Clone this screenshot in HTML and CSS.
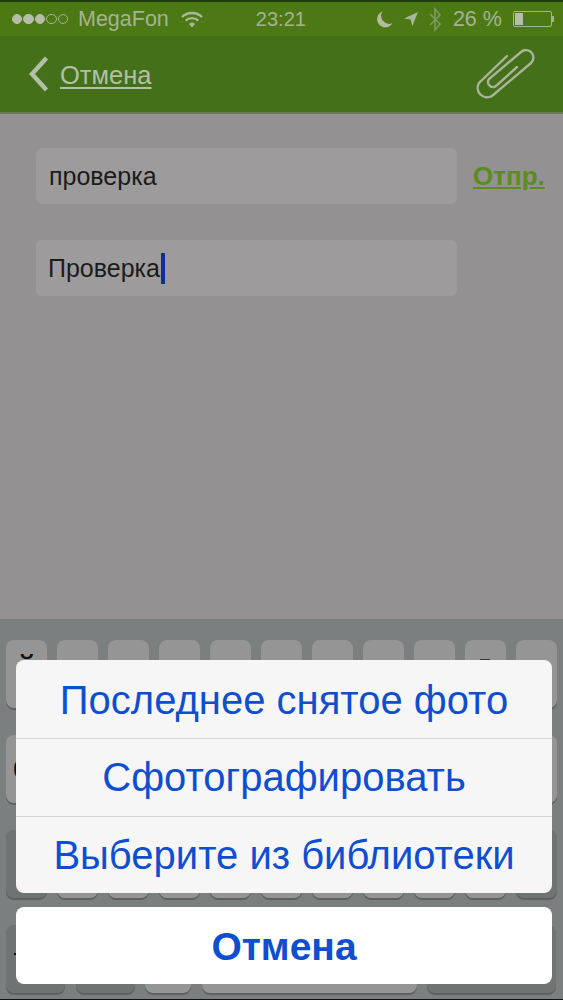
FILE: index.html
```html
<!DOCTYPE html>
<html lang="ru">
<head>
    <meta charset="UTF-8">
    <meta name="viewport" content="width=device-width, initial-scale=1.0">
    <title>Отправка</title>
    <link rel="stylesheet" href="styles.css">
</head>
<body>
    <div class="screen">
        <div class="status">
            <div class="dots">
                <i class="on"></i><i class="on"></i><i class="on"></i><i></i><i></i>
            </div>
            <span class="carrier">MegaFon</span>
            <svg class="wifi" width="22" height="17" viewBox="0 0 22 17">
                <path d="M1 6a14.500 14.500 0 0 1 20 0" fill="none" stroke="#a9b89a" stroke-width="2.400"/>
                <path d="M4.600 9.600a9.400 9.400 0 0 1 12.800 0" fill="none" stroke="#a9b89a" stroke-width="2.400"/>
                <path d="M8 13a4.400 4.400 0 0 1 6 0l-3 3.400z" fill="#a9b89a"/>
            </svg>
            <span class="time">23:21</span>
            <svg class="moon" width="18" height="17" viewBox="0 0 18 17">
                <path d="M7.500 0.500a8.200 8.200 0 1 0 10 11.600a8 8 0 0 1-10-11.600z" fill="#b0bba2"/>
            </svg>
            <svg class="arrow" width="14" height="14" viewBox="0 0 14 14">
                <path d="M14 0L0 6.500l6.600.9L8.400 14z" fill="#a9b89a"/>
            </svg>
            <svg class="bt" width="14" height="25" viewBox="0 0 14 25">
                <path d="M2 7l10 10-5 6V2l5 6L2 18" fill="none" stroke="#7f9a66" stroke-width="1.500"/>
            </svg>
            <span class="percent">26 %</span>
            <div class="battery"><div class="battery-fill"></div></div>
            <div class="battery-tip"></div>
        </div>

        <div class="nav">
            <svg class="chevron" width="20" height="36" viewBox="0 0 20 36">
                <path d="M17.500 2L3 18l14.500 16" fill="none" stroke="#b3bfa6" stroke-width="4.400"/>
            </svg>
            <a class="nav-link">Отмена</a>
            <svg class="clip" width="70" height="60" viewBox="0 0 70 60">
                <path d="M37 12L9 39A9.500 9.500 0 0 0 22 52L61 19A7 7 0 0 0 51 8L19 35A4 4 0 0 0 27 41L47 23" fill="none" stroke="#a9b49b" stroke-width="2.400" stroke-linecap="round"/>
            </svg>
        </div>

        <div class="form">
            <div class="form-row">
                <div class="field">проверка</div>
                <a class="send">Отпр.</a>
            </div>
            <div class="form-row">
                <div class="field field-second">Проверка<span class="caret"></span></div>
            </div>
        </div>

        <div class="keyboard">
            <div class="key-row">
                <div class="key">й</div><div class="key"></div><div class="key"></div><div class="key"></div><div class="key"></div><div class="key"></div><div class="key"></div><div class="key"></div><div class="key"></div><div class="key"><span class="key-tip"></span></div><div class="key"></div>
            </div>
            <div class="key-row">
                <div class="key key-side">ф</div><div class="key"></div><div class="key"></div><div class="key"></div><div class="key"></div><div class="key"></div><div class="key"></div><div class="key"></div><div class="key"></div><div class="key"></div><div class="key"></div>
            </div>
            <div class="key-row">
                <div class="key key-dark"></div><div class="key"></div><div class="key"></div><div class="key"></div><div class="key"></div><div class="key"></div><div class="key"></div><div class="key"></div><div class="key"></div><div class="key"></div><div class="key key-dark"></div>
            </div>
            <div class="key-row key-row-bottom">
                <div class="key key-dark"><span class="key-speck"></span></div>
                <div class="key key-dark"></div>
                <div class="key"></div>
                <div class="key"></div>
                <div class="key key-dark"></div>
            </div>
        </div>

        <div class="sheet">
            <div class="sheet-group">
                <div class="sheet-item">Последнее снятое фото</div>
                <div class="sheet-item">Сфотографировать</div>
                <div class="sheet-item">Выберите из библиотеки</div>
            </div>
            <div class="sheet-cancel">Отмена</div>
        </div>
    </div>
</body>
</html>
```

FILE: styles.css
```css
body {
    margin: 0;
    background-color: #111;
    font-family: "Liberation Sans", Arial, sans-serif;
}
.screen {
    position: relative;
    display: flex;
    flex-direction: column;
    width: 563px;
    height: 999px;
    overflow: hidden;
    background-color: #939191;
}
.status {
    display: flex;
    align-items: center;
    height: 34px;
    padding-left: 11.500px;
    border-top: 2px solid #1f3d0e;
    background-color: #4d7914;
    color: #a4b394;
    font-size: 21.500px;
}
.dots {
    display: flex;
    gap: 1px;
}
.dots i {
    width: 8.500px;
    height: 8.500px;
    border: 1px solid #a4b394;
    border-radius: 50%;
}
.dots .on {
    background-color: #b6bdab;
    border-color: #b6bdab;
}
.carrier {
    margin-left: 10px;
}
.wifi {
    margin-left: 12px;
}
.time {
    margin-left: 53px;
    font-size: 20px;
}
.moon {
    margin-left: 69px;
}
.arrow {
    margin-left: 11px;
}
.bt {
    margin-left: 10px;
}
.percent {
    margin-left: 11px;
    width: 60px;
    white-space: nowrap;
}
.battery {
    width: 35px;
    height: 12px;
    border: 1px solid #a4b394;
    border-radius: 2px;
    padding: 1px;
}
.battery-fill {
    width: 8px;
    height: 12px;
    background-color: #b6bdab;
}
.battery-tip {
    width: 2px;
    height: 6px;
    background-color: #a4b394;
}
.nav {
    display: flex;
    align-items: center;
    height: 78px;
    padding: 0 23px 0 29px;
    box-sizing: border-box;
    border-bottom: 2px solid #6a7a58;
    background-color: #45701a;
    color: #b3bfa6;
}
.nav-link {
    flex: 1;
    margin-left: 11px;
    padding-top: 3px;
    font-size: 25.500px;
    text-decoration: underline;
    text-underline-offset: 3px;
}
.chevron {
    flex-shrink: 0;
}
.form {
    flex: 1;
    padding: 34px 10px 0 36px;
}
.form-row {
    display: flex;
    align-items: center;
    margin-bottom: 36px;
}
.field {
    display: flex;
    align-items: center;
    flex-shrink: 0;
    width: 408px;
    height: 56px;
    padding-left: 13px;
    border-radius: 6px;
    background-color: #9d9b9b;
    color: #1b1b1b;
    font-size: 25px;
}
.field-second {
    padding-left: 12px;
    width: 409px;
}
.caret {
    width: 4px;
    height: 31px;
    margin-left: 1px;
    background-color: #0c2f9a;
}
.send {
    margin-left: 16px;
    color: #5b8c1e;
    font-size: 26px;
    font-weight: bold;
    text-decoration: underline;
}
.keyboard {
    display: flex;
    flex-direction: column;
    gap: 27px;
    height: 380px;
    box-sizing: border-box;
    padding: 21px 6px 0;
    background-color: #7b7f7f;
}
.key-row {
    display: grid;
    grid-template-columns: repeat(11, 1fr);
    column-gap: 9.500px;
    height: 68px;
}
.key-row-bottom {
    grid-template-columns: 59px 59px 46px 215px 129px;
    column-gap: 10.500px;
}
.key {
    display: flex;
    justify-content: center;
    padding-top: 8px;
    box-sizing: border-box;
    border-radius: 8px;
    background-color: #959595;
    box-shadow: 0 2px 0 #5f6262;
    color: #111;
    font-size: 34px;
}
.key-side {
    padding-top: 12px;
}
.key-dark {
    background-color: #6f7373;
}
.key-tip {
    width: 10px;
    height: 2px;
    margin-top: 11px;
    background-color: #333;
}
.key-speck {
    width: 2px;
    height: 2px;
    margin: 20px 0 0 -42px;
    background-color: #111;
}
.sheet {
    position: absolute;
    left: 16px;
    top: 660px;
    width: 536px;
    display: flex;
    flex-direction: column;
    gap: 14px;
    color: #0f4ecf;
    font-size: 40px;
    text-align: center;
}
.sheet-group {
    border-radius: 8px;
    overflow: hidden;
    background-color: #f6f6f7;
}
.sheet-item {
    height: 78px;
    line-height: 80px;
    white-space: nowrap;
    box-sizing: border-box;
}
.sheet-item + .sheet-item {
    border-top: 1px solid #d6d6d6;
    line-height: 76px;
}
.sheet-item:last-child {
    height: 77px;
}
.sheet-cancel {
    height: 77px;
    line-height: 79px;
    border-radius: 8px;
    background-color: #fff;
    font-size: 39px;
    font-weight: bold;
}
```
